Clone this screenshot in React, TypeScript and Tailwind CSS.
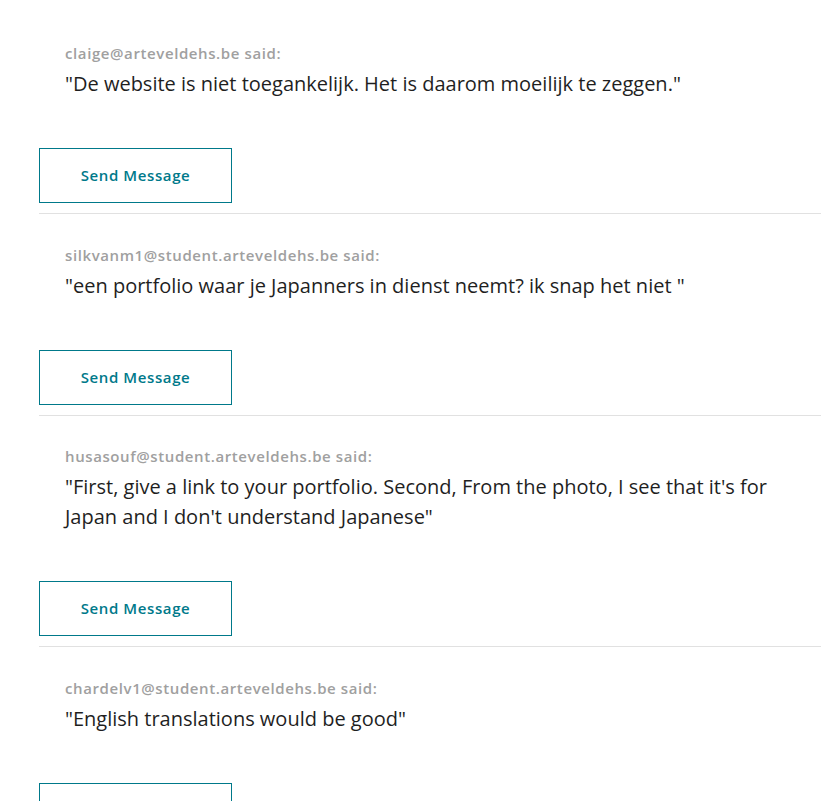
const comments = [
  {
    author: "claige@arteveldehs.be",
    text: '"De website is niet toegankelijk. Het is daarom moeilijk te zeggen."',
  },
  {
    author: "silkvanm1@student.arteveldehs.be",
    text: '"een portfolio waar je Japanners in dienst neemt? ik snap het niet "',
  },
  {
    author: "husasouf@student.arteveldehs.be",
    text: "\"First, give a link to your portfolio. Second, From the photo, I see that it's for Japan and I don't understand Japanese\"",
  },
  {
    author: "chardelv1@student.arteveldehs.be",
    text: '"English translations would be good"',
  },
];

export default function App() {
  return (
    <div className="h-[801px] overflow-hidden bg-white pt-[12.5px] pl-[39px] font-['Open_Sans',sans-serif]">
      {comments.map((c) => (
        <div key={c.author} className="border-b border-[#e1e1e1] pt-[30.5px] pb-[10px]">
          <div className="pl-[26px] pr-[30px]">
            <p className="text-[15px] leading-[20px] font-semibold tracking-[0.6px] text-[#a0a0a0]">
              {c.author} said:
            </p>
            <p className="mt-[6px] text-[20px] leading-[30px] text-[#1f1f1f]">{c.text}</p>
          </div>
          <button className="mt-[49px] block h-[55px] w-[193px] border border-[#00798a] text-[15px] font-semibold tracking-[0.6px] text-[#00798a]">
            Send Message
          </button>
        </div>
      ))}
    </div>
  );
}
